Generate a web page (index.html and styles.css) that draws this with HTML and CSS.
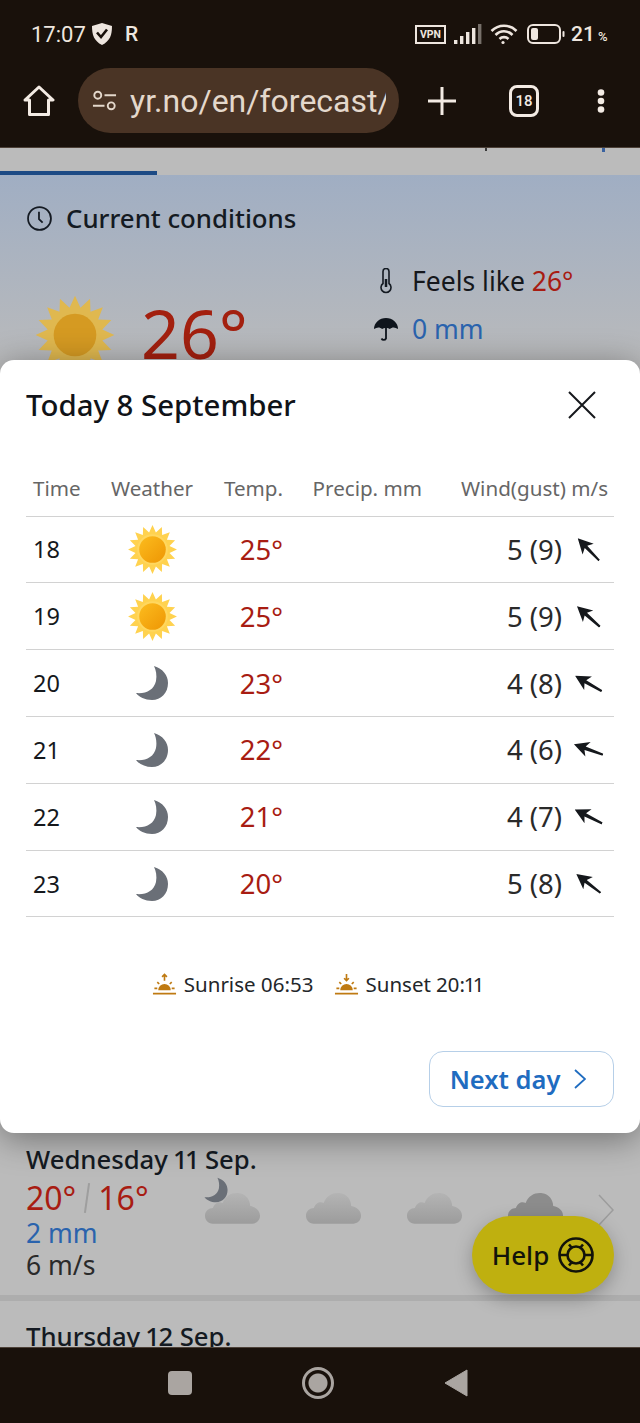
FILE: index.html
```html
<!DOCTYPE html>
<html lang="en">
	<head>
		<meta charset="utf-8">
		<title>Yr forecast</title>
		<link rel="stylesheet" href="styles.css">
	</head>
	<body>
		<svg class="sprite" aria-hidden="true">
			<defs>
				<linearGradient id="core" x1="0" y1="0" x2="1" y2="1">
					<stop offset="0" stop-color="#fcbc1e"/>
					<stop offset="1" stop-color="#ee9604"/>
				</linearGradient>
				<linearGradient id="cloudfill" x1="0" y1="0" x2="0" y2="1">
					<stop offset="0" stop-color="#b4b4b4"/>
					<stop offset="1" stop-color="#9c9c9c"/>
				</linearGradient>
				<symbol id="sun" viewBox="0 0 50 50">
					<polygon fill="#ffd24f" points="25,1 28.32,8.33 34.18,2.83 34.45,10.87 41.97,8.03 39.13,15.55 47.17,15.82 41.67,21.68 49,25 41.67,28.32 47.17,34.18 39.13,34.45 41.97,41.97 34.45,39.13 34.18,47.17 28.32,41.67 25,49 21.68,41.67 15.82,47.17 15.55,39.13 8.03,41.97 10.87,34.45 2.83,34.18 8.33,28.32 1,25 8.33,21.68 2.83,15.82 10.87,15.55 8.03,8.03 15.55,10.87 15.82,2.83 21.68,8.33"/>
					<circle cx="25" cy="25" r="15" fill="#ffd75f"/>
					<circle cx="25" cy="25" r="13" fill="url(#core)"/>
				</symbol>
				<symbol id="moon" viewBox="0 0 36 36">
					<path fill="#6a6f77" d="M20 1C29 4 34 10 34 18C34 28 27 35 18 35C11 35 5 32 2 28C12 29 20 25 22 16C23 10 22 5 20 1Z"/>
				</symbol>
				<symbol id="wind" viewBox="0 0 30 30">
					<path fill="#15181c" d="M15 0L22.500 14.500L16.700 11.500L16 30H14L13.300 11.500L7.500 14.500Z"/>
				</symbol>
				<symbol id="cloud" viewBox="0 0 58 34">
					<path d="M9 33C4 33 1 29 1 25C1 20 5 17 9 17C11 11 16 10 19 12C22 4 29 1 36 2C43 3 47 9 47 15C53 16 57 20 57 25C57 30 53 33 49 33Z"/>
				</symbol>
				<symbol id="sunpart" viewBox="0 0 26 26">
					<path fill="#bf7a12" d="M6.500 19A6.500 6.500 0 0 1 19.500 19Z"/>
					<path stroke="#bf7a12" stroke-width="1.700" fill="none" d="M1 22.500H25M2.500 17H5.500M20.500 17H23.500M5.500 10.500L7.500 12.500M20.500 10.500L18.500 12.500"/>
				</symbol>
			</defs>
		</svg>

		<header class="browser">
			<div class="status">
				<span class="clock">17:07</span>
				<svg class="shield" viewBox="0 0 22 24"><path fill="#eee6df" d="M11 1L21 4C21 13 19 19 11 23C3 19 1 13 1 4Z"/><path fill="none" stroke="#19110b" stroke-width="2.600" d="M6 10.500L10 15L16 7.500"/></svg>
				<span class="carrier">R</span>
				<span class="status_right">
					<span class="vpn">VPN</span>
					<svg class="signal" viewBox="0 0 28 22" fill="#eee6df"><rect x="0" y="17" width="3.400" height="4"/><rect x="6" y="13" width="3.400" height="8"/><rect x="12" y="9" width="3.400" height="12"/><rect x="18" y="5" width="3.400" height="16"/><rect x="24" y="1" width="3.400" height="20" fill="#77706a"/></svg>
					<svg class="wifi" viewBox="0 0 28 22" fill="none" stroke="#eee6df" stroke-width="2.600"><path d="M1.500 8C8.500 1 19.500 1 26.500 8"/><path d="M5.500 12C10.500 7 17.500 7 22.500 12"/><path d="M9.500 16C12 13.500 16 13.500 18.500 16"/><circle cx="13" cy="19.500" r="1.600" fill="#eee6df" stroke="none"/></svg>
					<svg class="battery" viewBox="0 0 38 20"><rect x="1" y="1" width="32" height="18" rx="5" fill="none" stroke="#eee6df" stroke-width="2"/><rect x="4" y="4" width="7" height="12" rx="2" fill="#eee6df"/><rect x="35.500" y="7" width="2" height="6" rx="1" fill="#eee6df"/></svg>
					<span class="level">21<small>%</small></span>
				</span>
			</div>
			<div class="toolbar">
				<svg class="home" viewBox="0 0 32 32" fill="none" stroke="#f3ebe4" stroke-width="3" stroke-linejoin="round"><path d="M2 15L16 2L30 15H25.500V29.500H6.500V15Z"/></svg>
				<div class="url">
					<svg class="tune" viewBox="0 0 26 22" fill="none" stroke="#e4d8cc" stroke-width="2"><circle cx="6" cy="5" r="3.600"/><path d="M13 5H25M1 16H13"/><circle cx="20" cy="16" r="3.600"/></svg>
					<span class="url_text">yr.no/en/forecast/</span>
				</div>
				<svg class="plus" viewBox="0 0 28 28" stroke="#f3ebe4" stroke-width="3"><path d="M14 0V28M0 14H28"/></svg>
				<span class="tabs_count">18</span>
				<svg class="dots" viewBox="0 0 8 24" fill="#f3ebe4"><circle cx="4" cy="3.500" r="3.300"/><circle cx="4" cy="12" r="3.300"/><circle cx="4" cy="20.500" r="3.300"/></svg>
			</div>
		</header>

		<main class="page">
			<div class="tabbar">
				<span class="indicator"></span>
				<span class="clip_mark"></span>
				<span class="clip_mark blue"></span>
			</div>
			<section class="current">
				<h2 class="current_title">
					<svg class="ico_clock" viewBox="0 0 24 24" fill="none" stroke="#141a22" stroke-width="1.700"><circle cx="12" cy="12" r="11"/><path d="M11.500 5.500V12.500L15 16"/></svg>
					Current conditions
				</h2>
				<div class="now">
					<svg class="now_sun" viewBox="0 0 50 50">
						<polygon fill="#e0b84f" points="25,1 28.32,8.33 34.18,2.83 34.45,10.87 41.97,8.03 39.13,15.55 47.17,15.82 41.67,21.68 49,25 41.67,28.32 47.17,34.18 39.13,34.45 41.97,41.97 34.45,39.13 34.18,47.17 28.32,41.67 25,49 21.68,41.67 15.82,47.17 15.55,39.13 8.03,41.97 10.87,34.45 2.83,34.18 8.33,28.32 1,25 8.33,21.68 2.83,15.82 10.87,15.55 8.03,8.03 15.55,10.87 15.82,2.83 21.68,8.33"/>
						<circle cx="25" cy="25" r="13" fill="#d59a22"/>
					</svg>
					<span class="now_temp">26°</span>
					<div class="now_side">
						<div class="now_line">
							<svg class="ico_side" viewBox="0 0 24 26" fill="none" stroke="#141a22" stroke-width="1.600"><path d="M9 3.500A3 3 0 0 1 15 3.500V15.500A5 5 0 1 1 9 15.500Z"/><path stroke-width="2.500" d="M12 11V19"/></svg>
							<span>Feels like <b class="warm">26°</b></span>
						</div>
						<div class="now_line">
							<svg class="ico_side" viewBox="0 0 24 26"><path fill="#0e141c" d="M0 13A12 11 0 0 1 24 13C21 11 18 11 16 13C14.500 11.500 9.500 11.500 8 13C6 11 3 11 0 13Z"/><path fill="none" stroke="#0e141c" stroke-width="1.800" d="M12 12V22.500A2.500 2.500 0 0 1 7.500 22.500"/></svg>
							<span class="rain">0 mm</span>
						</div>
					</div>
				</div>
			</section>
			<section class="day">
				<h3 class="day_title">Wednesday 11 Sep.</h3>
				<div class="day_body">
					<div class="day_info">
						<div class="day_temp"><b class="warm">20°</b><i class="slash"></i><b class="warm">16°</b></div>
						<div class="rain">2 mm</div>
						<div>6 m/s</div>
					</div>
					<div class="day_icons">
						<span class="night_cloud">
							<svg class="small_moon"><use href="#moon"/></svg>
							<svg class="cloud"><use href="#cloud"/></svg>
						</span>
						<svg class="cloud"><use href="#cloud"/></svg>
						<svg class="cloud"><use href="#cloud"/></svg>
						<svg class="cloud dark"><use href="#cloud"/></svg>
						<svg class="day_more" viewBox="0 0 16 32" fill="none" stroke="#9c9c9c" stroke-width="1.500"><path d="M1 1L15 16L1 31"/></svg>
					</div>
				</div>
			</section>
			<section class="day">
				<h3 class="day_title">Thursday 12 Sep.</h3>
			</section>

			<button class="help">Help
				<svg class="help_ico" viewBox="0 0 36 36" fill="none" stroke="#12130a" stroke-width="2.600"><circle cx="18" cy="18" r="16.500"/><circle cx="18" cy="18" r="8.500"/><path d="M11 7.500L14 11M25 7.500L22 11M11 28.500L14 25M25 28.500L22 25M2 18H9.500M26.500 18H34"/></svg>
			</button>

			<div class="modal">
				<div class="modal_head">
					<h1 class="modal_title">Today 8 September</h1>
					<svg class="close" viewBox="0 0 28 28" stroke="#16181c" stroke-width="2"><path d="M1 1L27 27M27 1L1 27"/></svg>
				</div>
				<div class="hour_table">
					<div class="row head">
						<span>Time</span><span class="mid">Weather</span><span class="end">Temp.</span><span class="end">Precip. mm</span><span class="end">Wind(gust) m/s</span>
					</div>
					<div class="row">
						<span class="hour">18</span>
						<svg class="wx"><use href="#sun"/></svg>
						<span class="end warm">25°</span><span></span>
						<span class="wind">5 (9)<svg class="arrow" style="transform:rotate(-44deg)"><use href="#wind"/></svg></span>
					</div>
					<div class="row">
						<span class="hour">19</span>
						<svg class="wx"><use href="#sun"/></svg>
						<span class="end warm">25°</span><span></span>
						<span class="wind">5 (9)<svg class="arrow" style="transform:rotate(-48deg)"><use href="#wind"/></svg></span>
					</div>
					<div class="row">
						<span class="hour">20</span>
						<svg class="wx moon"><use href="#moon"/></svg>
						<span class="end warm">23°</span><span></span>
						<span class="wind">4 (8)<svg class="arrow" style="transform:rotate(-60deg)"><use href="#wind"/></svg></span>
					</div>
					<div class="row">
						<span class="hour">21</span>
						<svg class="wx moon"><use href="#moon"/></svg>
						<span class="end warm">22°</span><span></span>
						<span class="wind">4 (6)<svg class="arrow" style="transform:rotate(-70deg)"><use href="#wind"/></svg></span>
					</div>
					<div class="row">
						<span class="hour">22</span>
						<svg class="wx moon"><use href="#moon"/></svg>
						<span class="end warm">21°</span><span></span>
						<span class="wind">4 (7)<svg class="arrow" style="transform:rotate(-63deg)"><use href="#wind"/></svg></span>
					</div>
					<div class="row">
						<span class="hour">23</span>
						<svg class="wx moon"><use href="#moon"/></svg>
						<span class="end warm">20°</span><span></span>
						<span class="wind">5 (8)<svg class="arrow" style="transform:rotate(-52deg)"><use href="#wind"/></svg></span>
					</div>
				</div>
				<div class="sun_times">
					<span class="sun_time">
						<svg class="sun_ico" viewBox="0 0 26 26"><use href="#sunpart"/><path stroke="#bf7a12" stroke-width="1.700" fill="none" d="M13 9V2.500M10.500 5L13 2.500L15.500 5"/></svg>
						Sunrise 06:53
					</span>
					<span class="sun_time">
						<svg class="sun_ico" viewBox="0 0 26 26"><use href="#sunpart"/><path stroke="#bf7a12" stroke-width="1.700" fill="none" d="M13 2V9M10.500 6.500L13 9L15.500 6.500"/></svg>
						Sunset 20:11
					</span>
				</div>
				<div class="modal_foot">
					<button class="next">Next day
						<svg class="next_ico" viewBox="0 0 12 20" fill="none" stroke="#1f6cc0" stroke-width="1.800"><path d="M1 1L11 10L1 19"/></svg>
					</button>
				</div>
			</div>
		</main>

		<footer class="nav">
			<span class="nav_square"></span>
			<span class="nav_circle"></span>
			<svg class="nav_back" viewBox="0 0 24 28" fill="#aaa5a1"><path d="M23 1V27L1 14Z" stroke="#aaa5a1" stroke-linejoin="round"/></svg>
		</footer>
	</body>
</html>
```

FILE: styles.css
```css
*{
	box-sizing:border-box;
}
html,body{
	margin:0;
	height:100%;
}
body{
	width:640px;
	height:1423px;
	display:flex;
	flex-direction:column;
	overflow:hidden;
	font-family:"Noto Sans","Open Sans",sans-serif;
	color:#15181c;
	background:#19110b;
}
h1,h2,h3{
	margin:0;
}
b{
	font-weight:400;
}
svg{
	display:block;
	flex:none;
}
.sprite{
	width:0;
	height:0;
}

/* browser chrome */
.browser{
	height:148px;
	flex:none;
	background:#19110b;
	border-bottom:1px solid #4d4138;
	font-family:Roboto,sans-serif;
	color:#eee6df;
}
.status{
	display:flex;
	align-items:center;
	height:68px;
	padding:0 34px 0 31px;
}
.clock{
	font-size:22px;
	width:60px;
}
.shield{
	width:22px;
	height:24px;
}
.carrier{
	margin-left:12px;
	font-size:21px;
	font-weight:500;
}
.status_right{
	margin-left:auto;
	display:flex;
	align-items:center;
}
.vpn{
	width:31px;
	height:19px;
	border:2px solid #eee6df;
	font-size:10.500px;
	line-height:15px;
	font-weight:700;
	text-align:center;
}
.signal{
	width:28px;
	height:22px;
	margin-left:8px;
}
.wifi{
	width:28px;
	height:22px;
	margin-left:8px;
}
.battery{
	width:38px;
	height:20px;
	margin-left:9px;
}
.level{
	margin-left:6px;
	font-size:21px;
	font-weight:500;
	width:35px;
}
.level small{
	font-size:13px;
	margin-left:3px;
}
.toolbar{
	display:flex;
	align-items:center;
	height:79px;
	padding-bottom:14px;
	padding-left:23px;
}
.home{
	width:32px;
	height:32px;
}
.url{
	width:321px;
	height:65px;
	margin-left:23px;
	padding:0 13px 0 14px;
	border-radius:33px;
	background:#4a3425;
	display:flex;
	align-items:center;
	gap:13px;
}
.tune{
	width:25px;
	height:22px;
}
.url_text{
	font-size:32px;
	color:#e4d8cc;
	white-space:nowrap;
	overflow:hidden;
}
.plus{
	width:28px;
	height:28px;
	margin-left:29px;
}
.tabs_count{
	width:30px;
	height:32px;
	margin-left:53px;
	border:3px solid #f3ebe4;
	border-radius:8px;
	font-size:15px;
	font-weight:500;
	line-height:26px;
	text-align:center;
	color:#f3ebe4;
}
.dots{
	width:8px;
	height:24px;
	margin-left:58px;
}

/* page behind the dialog */
.page{
	flex:1;
	position:relative;
	overflow:hidden;
	background:#bbbbbb;
}
.tabbar{
	height:27px;
	padding-top:23px;
}
.indicator{
	display:block;
	width:157px;
	height:4px;
	background:#1c4a85;
}
/* descenders of the scrolled away tab labels */
.clip_mark{
	position:absolute;
	left:485px;
	top:0;
	width:2px;
	height:3px;
	background:#3a3a3a;
}
.clip_mark.blue{
	left:602px;
	width:3px;
	height:4px;
	background:#3a62a0;
}
.current{
	height:958px;
	padding:30px 26px 0;
	background:linear-gradient(#a0aec3 0,#bbbbbb 200px);
}
.current_title{
	display:flex;
	align-items:center;
	gap:14px;
	font-size:25.800px;
	font-weight:500;
	line-height:26px;
	color:#141a22;
}
.ico_clock{
	width:25px;
	height:25px;
	margin-left:1px;
}
.now{
	display:flex;
	align-items:flex-start;
	margin-top:46px;
	padding-left:8px;
}
.now_sun{
	width:82px;
	height:82px;
	margin-top:17px;
}
.now_temp{
	margin-left:25px;
	font-size:68px;
	line-height:80px;
	margin-top:16px;
	color:#a3200f;
	width:233px;
}
.now_side{
	display:flex;
	flex-direction:column;
	gap:14px;
	margin-top:-13px;
}
.now_line{
	display:flex;
	align-items:center;
	gap:14px;
	font-size:26.500px;
	line-height:34px;
}
.ico_side{
	width:24px;
	height:26px;
}
.warm{
	color:#a81c12;
}
.rain{
	color:#2a63ad;
}
.day{
	padding:12px 26px 0;
	font-size:26.500px;
	line-height:32px;
	border-bottom:6px solid #adadad;
	color:#2a2a2a;
}
.day + .day{
	padding-top:21px;
}
.day_title{
	font-size:25.700px;
	font-weight:500;
	line-height:30px;
	color:#141a22;
	font-variant-numeric:proportional-nums;
}
.day_body{
	display:flex;
	height:120px;
}
.day_info{
	width:178px;
	padding-top:3px;
}
.day_temp{
	display:flex;
	align-items:center;
	gap:10px;
	font-size:32px;
	line-height:40px;
	margin-bottom:-1px;
}
.slash{
	display:block;
	width:2px;
	height:30px;
	background:#9e9e9e;
	transform:rotate(8deg);
}
.day_icons{
	display:flex;
	align-items:flex-start;
	gap:44px;
	padding-top:16px;
}
.cloud{
	width:57px;
	height:34px;
	fill:url(#cloudfill);
}
.cloud.dark{
	fill:#8c8c8c;
}
.night_cloud{
	position:relative;
	display:block;
}
.small_moon{
	position:absolute;
	left:-1px;
	top:-14px;
	width:26px;
	height:26px;
}
.day_more{
	width:16px;
	height:32px;
	margin:3px 0 0 -10px;
}
.help{
	position:absolute;
	left:472px;
	top:1068px;
	width:142px;
	height:78px;
	border:0;
	border-radius:39px;
	background:#bfb00f;
	box-shadow:0 6px 18px rgba(0,0,0,.25);
	font:500 26px "Noto Sans",sans-serif;
	color:#12130a;
	display:flex;
	align-items:center;
	justify-content:center;
	gap:9px;
}
.help_ico{
	width:36px;
	height:36px;
}

/* dialog */
.modal{
	position:absolute;
	left:0;
	right:0;
	top:212px;
	height:773px;
	padding:0 26px;
	background:#fff;
	border-radius:14px;
	box-shadow:0 6px 34px rgba(0,0,0,.4);
}
.modal_head{
	display:flex;
	align-items:center;
	justify-content:space-between;
	height:90px;
	padding-right:18px;
}
.modal_title{
	font-size:29.400px;
	font-weight:500;
	color:#101318;
}
.close{
	width:28px;
	height:28px;
}
.hour_table{
	margin-top:11px;
}
.row{
	display:grid;
	grid-template-columns:67px 104px 79px 139px 186px;
	align-items:center;
	height:66.830px;
	padding:0 6px 0 7px;
	border-bottom:1px solid #d2d2d2;
	font-size:27.500px;
}
.row.head{
	height:55.500px;
	font-size:20.600px;
	color:#666;
	white-space:nowrap;
}
.mid{
	text-align:center;
}
.end{
	text-align:right;
}
.hour{
	font-size:23.500px;
}
.wx{
	width:51px;
	height:51px;
	justify-self:center;
}
.wx.moon{
	width:36px;
	height:36px;
}
.wind{
	display:flex;
	align-items:center;
	justify-content:flex-end;
	gap:11px;
	color:#2a2a2a;
	padding-right:4px;
}
.arrow{
	width:31px;
	height:31px;
}
.sun_times{
	display:flex;
	align-items:center;
	justify-content:center;
	gap:20px;
	height:133.500px;
	padding-right:5px;
	font-size:20.500px;
	color:#23262a;
	font-variant-numeric:proportional-nums;
}
.sun_time{
	display:flex;
	align-items:center;
	gap:7px;
}
.sun_ico{
	width:25px;
	height:25px;
}
.modal_foot{
	display:flex;
	justify-content:flex-end;
}
.next{
	display:flex;
	align-items:center;
	justify-content:center;
	gap:14px;
	width:185px;
	height:56px;
	padding:0 7px 0 0;
	background:#fff;
	border:1px solid #b6cfe8;
	border-radius:14px;
	font:600 25.500px "Noto Sans",sans-serif;
	color:#1f6cc0;
}
.next_ico{
	width:12px;
	height:20px;
}

/* android nav */
.nav{
	height:76px;
	flex:none;
	background:#19110b;
	border-top:1px solid #4d4138;
	display:grid;
	grid-template-columns:repeat(3,138px);
	justify-content:center;
	justify-items:center;
	align-items:center;
	padding:0 4px 6px 0;
}
.nav_square{
	width:24px;
	height:24px;
	border-radius:4px;
	background:#aaa5a1;
}
.nav_circle{
	width:32px;
	height:32px;
	border-radius:50%;
	border:3px solid #aaa5a1;
	background:radial-gradient(circle,#aaa5a1 0,#aaa5a1 9px,#19110b 10px);
}
.nav_back{
	width:24px;
	height:28px;
}
```
